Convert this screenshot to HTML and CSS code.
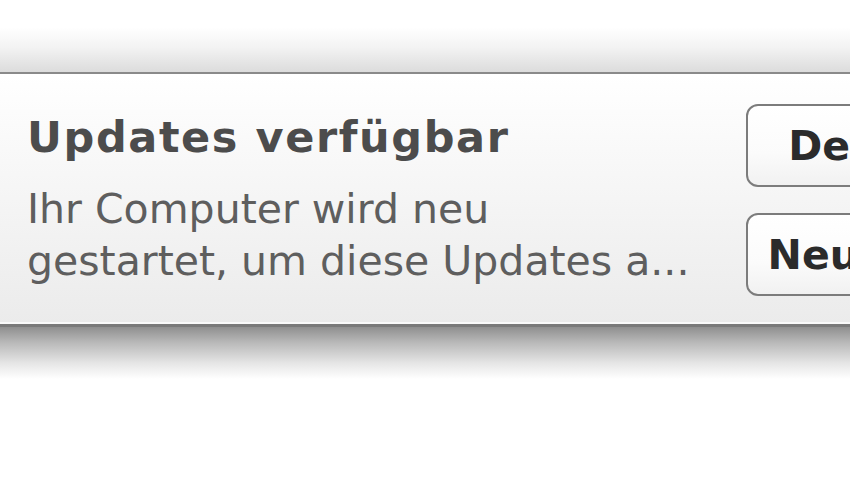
FILE: index.html
```html
<!DOCTYPE html>
<html lang="de">
<head>
<meta charset="utf-8">
<title>Updates verfügbar</title>
<link rel="stylesheet" href="styles.css">
</head>
<body>
<div class="stage">
  <div class="top-shade"></div>
  <div class="panel">
    <div class="text-col">
      <div class="title">Updates verfügbar</div>
      <div class="body-text">Ihr Computer wird neu<br>gestartet, um diese Updates a...</div>
    </div>
    <div class="btn-col">
      <div class="btn">Details</div>
      <div class="btn">Neustart</div>
    </div>
  </div>
  <div class="bottom-shade"></div>
</div>
</body>
</html>
```

FILE: styles.css
```css
html, body {
  margin: 0;
  padding: 0;
  background: #ffffff;
  width: 850px;
  height: 478px;
  overflow: hidden;
}
.stage {
  display: flex;
  flex-direction: column;
  width: 850px;
  padding-top: 27px;
}
.top-shade {
  height: 45px;
  background: linear-gradient(to bottom, #ffffff 0%, #f3f3f3 45%, #dcdcdc 100%);
}
.panel {
  display: grid;
  grid-template-columns: 746px 246px;
  height: 250px;
  overflow: hidden;
  border-top: 2px solid #8a8a8a;
  border-bottom: 3px solid #7a7a7a;
  box-shadow: inset 0 -2px 0 #fafafa;
  background: linear-gradient(to bottom, #ffffff 0%, #f5f5f5 50%, #ebebeb 100%);
  font-family: "DejaVu Sans", Verdana, sans-serif;
}
.text-col {
  display: flex;
  flex-direction: column;
  padding: 38px 0 0 27px;
}
.title {
  font-size: 43px;
  line-height: 50px;
  font-weight: bold;
  color: #4c4c4c;
  letter-spacing: 1.6px;
  white-space: nowrap;
}
.body-text {
  margin-top: 21px;
  font-size: 41px;
  line-height: 52px;
  color: #5e5e5e;
  white-space: nowrap;
}
.btn-col {
  display: flex;
  flex-direction: column;
  gap: 26px;
  padding-top: 30px;
}
.btn {
  height: 83px;
  box-sizing: border-box;
  border: 2px solid #7c7c7c;
  border-radius: 12px;
  background: linear-gradient(to bottom, #ffffff 0%, #fbfbfb 60%, #f1f1f1 100%);
  display: flex;
  align-items: center;
  justify-content: center;
  font-size: 41px;
  font-weight: bold;
  color: #2b2b2b;
}
.bottom-shade {
  height: 52px;
  background: linear-gradient(to bottom, #8f8f8f 0%, #b9b9b9 30%, #e6e6e6 70%, #ffffff 100%);
}
```
